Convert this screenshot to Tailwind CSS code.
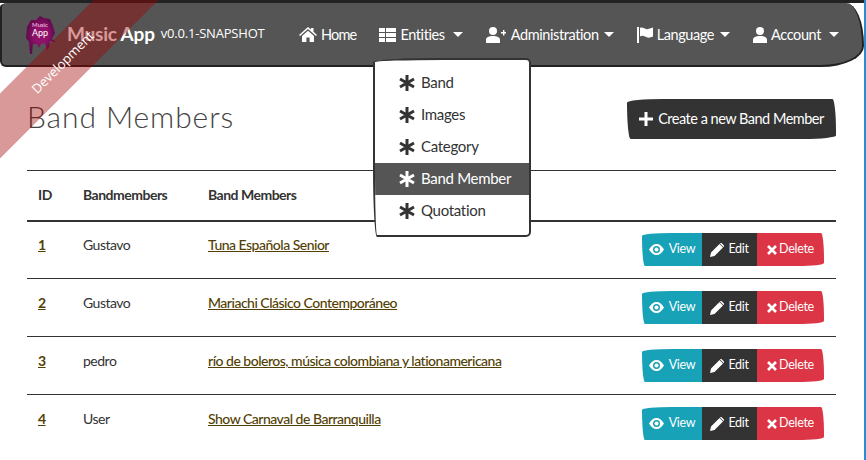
<!DOCTYPE html>
<html lang="en">
<head>
<meta charset="utf-8">
<title>Band Members</title>
<script src="https://cdn.jsdelivr.net/npm/@tailwindcss/browser@4"></script>
</head>
<body class="bg-white overflow-hidden font-['Lato',sans-serif] text-[#333]">
<div class="relative w-[866px] h-[460px] overflow-hidden border-r-2 border-[#2b8bd6]">
    <!-- Development ribbon -->
    <div class="absolute left-[-81px] top-[44px] w-[280px] h-[46px] -rotate-45 bg-[#a00000]/40 z-20 flex items-center justify-center pl-[12px] text-white text-[13px] font-['Open_Sans',sans-serif]">Development</div>

    <!-- Navbar -->
    <div class="h-[3px] bg-[#222]"></div>
    <nav class="w-[864px] h-[64px] bg-[#555] border-2 border-t-0 border-[#222] rounded-[8px_18px_43px_6px/4px_42px_21px_6px] flex items-center justify-between pl-[22px] pr-[23px] text-white whitespace-nowrap">
        <div class="flex items-center">
            <svg class="w-[32px] h-[42px] mr-[11px] mt-[2px]" viewBox="0 0 32 42">
                <defs><radialGradient id="ink"><stop offset="0.45" stop-color="#90106a"/><stop offset="1" stop-color="#5f0a4c"/></radialGradient></defs>
                <path d="M3 13 L7 6 L12 6 L16 2 L20 4 L26 5 L29 12 L31 19 L28 25 L32 28 L26 27 L25 33 L23 36 L21 29 L17 30 L15 34 L13 30 L9 30 L8 40 L6 40 L5 28 L2 24 Z" fill="url(#ink)"/>
                <text x="16" y="13" text-anchor="middle" font-size="6" fill="#f6d0e6">Music</text>
                <text x="16" y="22" text-anchor="middle" font-size="9" fill="#fff">App</text>
            </svg>
            <span class="text-[19px] font-bold tracking-[-0.2px]">Music App</span>
            <span class="ml-[6px] text-[13px] font-['Open_Sans',sans-serif] tracking-[-0.2px]">v0.0.1-SNAPSHOT</span>
        </div>
        <ul class="flex items-center gap-[23px] text-[14.5px] tracking-[-0.4px] pt-[1px]">
            <li class="flex items-center gap-[4px] tracking-[-0.8px]">
                <svg class="w-[18px] h-[15px]" viewBox="0 0 18 15" fill="#fff"><path d="M9 0 L12 2.6 V1 H14.500 V4.800 L18 8 L17 9 L9 2 L1 9 L0 8 Z M3 9 L9 3.800 L15 9 V15 H10.600 V10.500 H7.400 V15 H3 Z"/></svg>
                Home
            </li>
            <li class="flex items-center gap-[4px]">
                <svg class="w-[17px] h-[14px]" viewBox="0 0 17 14" fill="#fff"><path d="M0 0H6V4H0Z M7 0H17V4H7Z M0 5H6V9H0Z M7 5H17V9H7Z M0 10H6V14H0Z M7 10H17V14H7Z"/></svg>
                Entities
                <span class="ml-[4px] border-x-[5px] border-x-transparent border-t-[5px] border-t-white"></span>
            </li>
            <li class="flex items-center gap-[5px]">
                <svg class="w-[20px] h-[16px]" viewBox="0 0 20 16" fill="#fff"><circle cx="7" cy="4" r="4"/><path d="M0 16 V13 C0 10 3 9 7 9 C11 9 14 10 14 13 V16 Z M15 5H17V3H18.400V5H20V6.400H18.400V8.400H17V6.400H15Z"/></svg>
                Administration
                <span class="border-x-[5px] border-x-transparent border-t-[5px] border-t-white"></span>
            </li>
            <li class="flex items-center gap-[4px]">
                <svg class="w-[16px] h-[16px]" viewBox="0 0 16 16" fill="#fff"><path d="M0 0H2V16H0Z M3 1 C6 -0.500 8 3 11 2 C13 1.500 14.500 1 16 0.500 V9.500 C13 11 10 11 8 9.500 C6 8.500 4.500 8.500 3 9.500 Z"/></svg>
                Language
                <span class="ml-[2px] border-x-[5px] border-x-transparent border-t-[5px] border-t-white"></span>
            </li>
            <li class="flex items-center gap-[4px]">
                <svg class="w-[14px] h-[16px]" viewBox="0 0 14 16" fill="#fff"><circle cx="7" cy="4" r="4"/><path d="M0 16 V13 C0 10 3 9 7 9 C11 9 14 10 14 13 V16 Z"/></svg>
                Account
                <span class="ml-[4px] border-x-[5px] border-x-transparent border-t-[5px] border-t-white"></span>
            </li>
        </ul>
    </nav>

    <!-- Entities dropdown -->
    <ul class="absolute left-[373px] top-[58px] w-[158px] h-[179px] bg-white border-2 border-[#333] rounded-[70px_5px_5px_4px/4px_5px_5px_70px] overflow-hidden pt-[7px] z-10 text-[15px] tracking-[-0.3px] text-[#333]">
        <li class="h-[32px] pl-[24px] flex items-center gap-[6px]"><svg class="w-[16px] h-[16px]" viewBox="0 0 16 16" stroke="currentColor" stroke-width="3"><path d="M8 0V16M1 4L15 12M15 4L1 12"/></svg><span class="-mt-[2px]">Band</span></li>
        <li class="h-[32px] pl-[24px] flex items-center gap-[6px]"><svg class="w-[16px] h-[16px]" viewBox="0 0 16 16" stroke="currentColor" stroke-width="3"><path d="M8 0V16M1 4L15 12M15 4L1 12"/></svg><span class="-mt-[2px]">Images</span></li>
        <li class="h-[32px] pl-[24px] flex items-center gap-[6px]"><svg class="w-[16px] h-[16px]" viewBox="0 0 16 16" stroke="currentColor" stroke-width="3"><path d="M8 0V16M1 4L15 12M15 4L1 12"/></svg><span class="-mt-[2px]">Category</span></li>
        <li class="h-[32px] pl-[24px] flex items-center gap-[6px] bg-[#555] text-white"><svg class="w-[16px] h-[16px]" viewBox="0 0 16 16" stroke="currentColor" stroke-width="3"><path d="M8 0V16M1 4L15 12M15 4L1 12"/></svg><span class="-mt-[2px]">Band Member</span></li>
        <li class="h-[32px] pl-[24px] flex items-center gap-[6px]"><svg class="w-[16px] h-[16px]" viewBox="0 0 16 16" stroke="currentColor" stroke-width="3"><path d="M8 0V16M1 4L15 12M15 4L1 12"/></svg><span class="-mt-[2px]">Quotation</span></li>
    </ul>

    <main class="pl-[27px] pr-[28px]">
        <div class="flex items-center justify-between h-[103px]">
            <h2 class="text-[30px] font-light tracking-[0.9px] text-[#444] pb-[4px]">Band Members</h2>
            <button class="w-[209px] h-[40px] bg-[#333] text-white text-[14.5px] tracking-[-0.5px] whitespace-nowrap rounded-[255px_25px_225px_25px/25px_225px_25px_255px] flex items-center justify-center gap-[5px]">
                <svg class="w-[14px] h-[14px]" viewBox="0 0 14 14" fill="#fff"><path d="M5.500 0H8.500V5.500H14V8.500H8.500V14H5.500V8.500H0V5.500H5.500Z"/></svg>
                Create a new Band Member
            </button>
        </div>
        <table class="w-full text-[14px] tracking-[-0.5px] border-collapse">
            <thead>
                <tr class="h-[50px] border-t border-[#333] border-b-2 text-left">
                    <th class="pl-[11px] pb-[2px] w-[56px] font-bold">ID</th>
                    <th class="w-[125px] pb-[2px] font-bold">Bandmembers</th>
                    <th class="pb-[2px] font-bold">Band Members</th>
                    <th></th>
                </tr>
            </thead>
            <tbody>
                <tr class="h-[58px] border-b border-[#333]">
                    <td class="pl-[11px] pb-[10px] underline font-bold text-[#533f03]">1</td>
                    <td class="pb-[10px]">Gustavo</td>
                    <td class="pb-[10px] underline font-medium text-[#533f03]">Tuna Española Senior</td>
                    <td class="pr-[12px]"><div class="flex justify-end"><div class="flex h-[33px] text-[12.5px] tracking-[-0.3px] text-white rounded-[255px_25px_225px_25px/25px_225px_25px_255px] overflow-hidden">
                        <span class="w-[60px] bg-[#17a2b8] flex items-center justify-center gap-[5px]"><svg class="w-[15px] h-[11px]" viewBox="0 0 15 11" fill="#fff"><path fill-rule="evenodd" d="M0 5.500C2 2 4.500 0 7.500 0S13 2 15 5.500C13 9 10.500 11 7.500 11S2 9 0 5.500Z M7.500 2A3.500 3.500 0 1 0 7.500 9A3.500 3.500 0 1 0 7.500 2Z"/><circle cx="7.500" cy="5.500" r="2"/></svg>View</span>
                        <span class="w-[55px] bg-[#333] flex items-center justify-center gap-[4px]"><svg class="w-[14px] h-[14px]" viewBox="0 0 14 14" fill="#fff"><path d="M0 14L1 9.500L9.500 1L13 4.500L4.500 13Z M10.500 0L11.500 0L14 2.500L14 3.500L13.500 4L10 0.500Z"/></svg>Edit</span>
                        <span class="w-[67px] bg-[#dc3545] flex items-center justify-center gap-[2px]"><svg class="w-[10px] h-[10px]" viewBox="0 0 10 10" fill="none" stroke="#fff" stroke-width="2.600"><path d="M1 1L9 9M9 1L1 9"/></svg>Delete</span>
                    </div></div></td>
                </tr>
                <tr class="h-[58px] border-b border-[#333]">
                    <td class="pl-[11px] pb-[10px] underline font-bold text-[#533f03]">2</td>
                    <td class="pb-[10px]">Gustavo</td>
                    <td class="pb-[10px] underline font-medium text-[#533f03]">Mariachi Clásico Contemporáneo</td>
                    <td class="pr-[12px]"><div class="flex justify-end"><div class="flex h-[33px] text-[12.5px] tracking-[-0.3px] text-white rounded-[255px_25px_225px_25px/25px_225px_25px_255px] overflow-hidden">
                        <span class="w-[60px] bg-[#17a2b8] flex items-center justify-center gap-[5px]"><svg class="w-[15px] h-[11px]" viewBox="0 0 15 11" fill="#fff"><path fill-rule="evenodd" d="M0 5.500C2 2 4.500 0 7.500 0S13 2 15 5.500C13 9 10.500 11 7.500 11S2 9 0 5.500Z M7.500 2A3.500 3.500 0 1 0 7.500 9A3.500 3.500 0 1 0 7.500 2Z"/><circle cx="7.500" cy="5.500" r="2"/></svg>View</span>
                        <span class="w-[55px] bg-[#333] flex items-center justify-center gap-[4px]"><svg class="w-[14px] h-[14px]" viewBox="0 0 14 14" fill="#fff"><path d="M0 14L1 9.500L9.500 1L13 4.500L4.500 13Z M10.500 0L11.500 0L14 2.500L14 3.500L13.500 4L10 0.500Z"/></svg>Edit</span>
                        <span class="w-[67px] bg-[#dc3545] flex items-center justify-center gap-[2px]"><svg class="w-[10px] h-[10px]" viewBox="0 0 10 10" fill="none" stroke="#fff" stroke-width="2.600"><path d="M1 1L9 9M9 1L1 9"/></svg>Delete</span>
                    </div></div></td>
                </tr>
                <tr class="h-[58px] border-b border-[#333]">
                    <td class="pl-[11px] pb-[10px] underline font-bold text-[#533f03]">3</td>
                    <td class="pb-[10px]">pedro</td>
                    <td class="pb-[10px] underline font-medium text-[#533f03]">río de boleros, música colombiana y lationamericana</td>
                    <td class="pr-[12px]"><div class="flex justify-end"><div class="flex h-[33px] text-[12.5px] tracking-[-0.3px] text-white rounded-[255px_25px_225px_25px/25px_225px_25px_255px] overflow-hidden">
                        <span class="w-[60px] bg-[#17a2b8] flex items-center justify-center gap-[5px]"><svg class="w-[15px] h-[11px]" viewBox="0 0 15 11" fill="#fff"><path fill-rule="evenodd" d="M0 5.500C2 2 4.500 0 7.500 0S13 2 15 5.500C13 9 10.500 11 7.500 11S2 9 0 5.500Z M7.500 2A3.500 3.500 0 1 0 7.500 9A3.500 3.500 0 1 0 7.500 2Z"/><circle cx="7.500" cy="5.500" r="2"/></svg>View</span>
                        <span class="w-[55px] bg-[#333] flex items-center justify-center gap-[4px]"><svg class="w-[14px] h-[14px]" viewBox="0 0 14 14" fill="#fff"><path d="M0 14L1 9.500L9.500 1L13 4.500L4.500 13Z M10.500 0L11.500 0L14 2.500L14 3.500L13.500 4L10 0.500Z"/></svg>Edit</span>
                        <span class="w-[67px] bg-[#dc3545] flex items-center justify-center gap-[2px]"><svg class="w-[10px] h-[10px]" viewBox="0 0 10 10" fill="none" stroke="#fff" stroke-width="2.600"><path d="M1 1L9 9M9 1L1 9"/></svg>Delete</span>
                    </div></div></td>
                </tr>
                <tr class="h-[58px]">
                    <td class="pl-[11px] pb-[10px] underline font-bold text-[#533f03]">4</td>
                    <td class="pb-[10px]">User</td>
                    <td class="pb-[10px] underline font-medium text-[#533f03]">Show Carnaval de Barranquilla</td>
                    <td class="pr-[12px]"><div class="flex justify-end"><div class="flex h-[33px] text-[12.5px] tracking-[-0.3px] text-white rounded-[255px_25px_225px_25px/25px_225px_25px_255px] overflow-hidden">
                        <span class="w-[60px] bg-[#17a2b8] flex items-center justify-center gap-[5px]"><svg class="w-[15px] h-[11px]" viewBox="0 0 15 11" fill="#fff"><path fill-rule="evenodd" d="M0 5.500C2 2 4.500 0 7.500 0S13 2 15 5.500C13 9 10.500 11 7.500 11S2 9 0 5.500Z M7.500 2A3.500 3.500 0 1 0 7.500 9A3.500 3.500 0 1 0 7.500 2Z"/><circle cx="7.500" cy="5.500" r="2"/></svg>View</span>
                        <span class="w-[55px] bg-[#333] flex items-center justify-center gap-[4px]"><svg class="w-[14px] h-[14px]" viewBox="0 0 14 14" fill="#fff"><path d="M0 14L1 9.500L9.500 1L13 4.500L4.500 13Z M10.500 0L11.500 0L14 2.500L14 3.500L13.500 4L10 0.500Z"/></svg>Edit</span>
                        <span class="w-[67px] bg-[#dc3545] flex items-center justify-center gap-[2px]"><svg class="w-[10px] h-[10px]" viewBox="0 0 10 10" fill="none" stroke="#fff" stroke-width="2.600"><path d="M1 1L9 9M9 1L1 9"/></svg>Delete</span>
                    </div></div></td>
                </tr>
            </tbody>
        </table>
    </main>
</div>
</body>
</html>
